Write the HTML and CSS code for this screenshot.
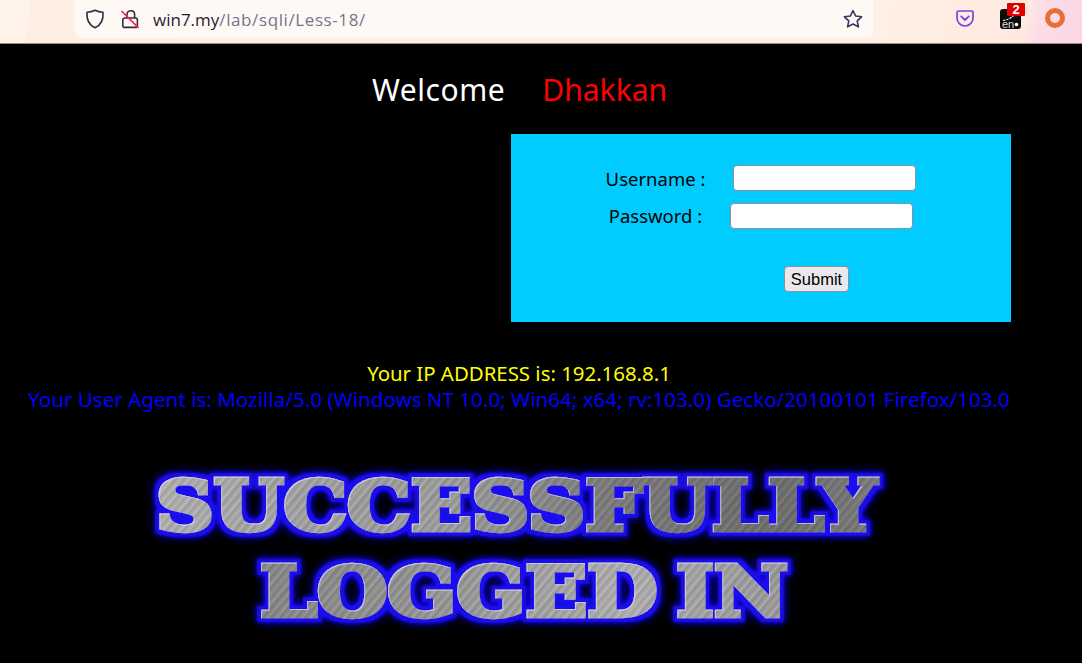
FILE: index.html
```html
<!DOCTYPE html>
<html lang="en">
<head>
<meta charset="utf-8">
<title>Less-18</title>
<link rel="stylesheet" href="styles.css">
</head>
<body>
<header class="toolbar">
  <div class="urlbar">
    <svg class="icon shield" viewBox="0 0 20 20" width="20" height="20"><path d="M10 1.2 C12.5 2.4 15 3 18 3.2 C18.6 10.5 15.6 16.2 10 18.8 C4.4 16.2 1.4 10.5 2 3.2 C5 3 7.5 2.4 10 1.2 Z" fill="none" stroke="#2f2c47" stroke-width="1.6" stroke-linejoin="round"/></svg>
    <svg class="icon lock" viewBox="0 0 20 20" width="20" height="20"><path d="M7 9 V5.2 C7 0.6 14.6 0.6 14.6 5.2 V9" fill="none" stroke="#2f2c47" stroke-width="1.6"/><rect x="2.8" y="9" width="14.6" height="9.4" rx="2" fill="none" stroke="#2f2c47" stroke-width="1.6"/><path d="M1.5 2 L18.5 18.8" stroke="#ff1f4e" stroke-width="1.7"/></svg>
    <span class="url"><span class="host">win7.my</span><span class="path">/lab/sqli/Less-18/</span></span>
    <svg class="icon star" viewBox="0 0 20 20" width="20" height="20"><path d="M10 1.6 L12.6 7 L18.6 7.8 L14.2 11.9 L15.4 17.9 L10 15 L4.6 17.9 L5.8 11.9 L1.4 7.8 L7.4 7 Z" fill="none" stroke="#38345a" stroke-width="1.6" stroke-linejoin="round"/></svg>
  </div>
  <div class="tools">
    <svg class="pocket" viewBox="0 0 18 17" width="18" height="17"><path d="M2.5 1 H15.5 A1.5 1.5 0 0 1 17 2.5 V8 A8 8 0 0 1 1 8 V2.5 A1.5 1.5 0 0 1 2.5 1 Z" fill="none" stroke="#7542e5" stroke-width="1.7"/><path d="M5.2 6.4 L9 10 L12.8 6.4" fill="none" stroke="#7542e5" stroke-width="1.8" stroke-linecap="round" stroke-linejoin="round"/></svg>
    <div class="ext">
      <svg class="ext-art" viewBox="0 0 21 20" width="21" height="20"><path d="M3 11.5 C7 10.5 11 10 15 5" fill="none" stroke="#fff" stroke-width="1.1" stroke-dasharray="2.4 1"/><circle cx="16.5" cy="15.5" r="1.8" fill="#fff"/></svg>
      <span class="ext-en">en</span>
      <span class="badge">2</span>
    </div>
    <span class="ring"></span>
  </div>
</header>
<main class="page">
  <h1 class="welcome"><span class="greet">Welcome</span><span class="name">Dhakkan</span></h1>
  <form class="login">
    <div class="row"><label for="u">Username :</label><input id="u" type="text"></div>
    <div class="row"><label class="pass" for="p">Password :</label><input id="p" type="password"></div>
    <button type="button" class="submit">Submit</button>
  </form>
  <div class="info">
    <p class="ip">Your IP ADDRESS is: 192.168.8.1</p>
    <p class="agent">Your User Agent is: Mozilla/5.0 (Windows NT 10.0; Win64; x64; rv:103.0) Gecko/20100101 Firefox/103.0</p>
  </div>
  <svg class="logo" viewBox="0 0 780 190" width="780" height="190" role="img">
    <defs>
      <pattern id="brush" width="26" height="26" patternUnits="userSpaceOnUse" patternTransform="rotate(-50)">
        <rect width="26" height="26" fill="#a4a4a4"/>
        <rect y="1" width="26" height="1" fill="#bdbdbd"/>
        <rect y="4" width="26" height="1.6" fill="#8f8f8f"/>
        <rect y="8" width="26" height=".8" fill="#b8b8b8"/>
        <rect y="10" width="26" height="2.4" fill="#989898"/>
        <rect y="14.5" width="26" height="1" fill="#c2c2c2"/>
        <rect y="17" width="26" height="1.4" fill="#929292"/>
        <rect y="21" width="26" height=".8" fill="#b4b4b4"/>
        <rect y="23.5" width="26" height="1.2" fill="#969696"/>
      </pattern>
      <linearGradient id="shade1" gradientUnits="userSpaceOnUse" x1="30" x2="755" y1="0" y2="0">
        <stop offset="0" stop-color="#fff" stop-opacity=".12"/>
        <stop offset=".4" stop-color="#000" stop-opacity=".05"/>
        <stop offset=".62" stop-color="#000" stop-opacity=".25"/>
        <stop offset=".85" stop-color="#000" stop-opacity=".33"/>
        <stop offset="1" stop-color="#000" stop-opacity=".25"/>
      </linearGradient>
      <linearGradient id="shade2" gradientUnits="userSpaceOnUse" x1="133" x2="660" y1="0" y2="0">
        <stop offset="0" stop-color="#000" stop-opacity=".18"/>
        <stop offset=".3" stop-color="#000" stop-opacity=".1"/>
        <stop offset=".7" stop-color="#fff" stop-opacity=".1"/>
        <stop offset="1" stop-color="#000" stop-opacity=".06"/>
      </linearGradient>
      <mask id="mask-one" maskUnits="userSpaceOnUse" x="0" y="0" width="780" height="190">
        <text class="logo-text" x="29" y="81" textLength="720" lengthAdjust="spacingAndGlyphs" fill="#fff" stroke="#fff">SUCCESSFULLY</text>
      </mask>
      <mask id="mask-two" maskUnits="userSpaceOnUse" x="0" y="0" width="780" height="190">
        <text class="logo-text" x="133" y="167" textLength="528" lengthAdjust="spacingAndGlyphs" fill="#fff" stroke="#fff">LOGGED IN</text>
      </mask>
      <filter id="glow" x="-5%" y="-25%" width="110%" height="150%">
        <feMorphology in="SourceAlpha" operator="dilate" radius="4" result="fat"/>
        <feFlood flood-color="#1a0df0" result="blue"/>
        <feComposite in="blue" in2="fat" operator="in" result="core"/>
        <feGaussianBlur in="core" stdDeviation="1.4" result="coreSoft"/>
        <feGaussianBlur in="core" stdDeviation="4.5" result="halo"/>
        <feOffset in="SourceAlpha" dx="1" dy="1" result="shift"/>
        <feComposite in="SourceAlpha" in2="shift" operator="out" result="edge"/>
        <feFlood flood-color="#e8e8f2" flood-opacity=".55" result="pale"/>
        <feComposite in="pale" in2="edge" operator="in" result="light"/>
        <feMerge>
          <feMergeNode in="halo"/>
          <feMergeNode in="coreSoft"/>
          <feMergeNode in="SourceGraphic"/>
          <feMergeNode in="light"/>
        </feMerge>
      </filter>
    </defs>
    <g filter="url(#glow)">
      <text class="logo-text" x="29" y="81" textLength="720" lengthAdjust="spacingAndGlyphs" fill="url(#brush)" stroke="url(#brush)">SUCCESSFULLY</text>
      <rect x="0" y="0" width="780" height="190" fill="url(#shade1)" mask="url(#mask-one)"/>
      <text class="logo-text" x="133" y="167" textLength="528" lengthAdjust="spacingAndGlyphs" fill="url(#brush)" stroke="url(#brush)">LOGGED IN</text>
      <rect x="0" y="0" width="780" height="190" fill="url(#shade2)" mask="url(#mask-two)"/>
    </g>
  </svg>
</main>
</body>
</html>
```
FILE: styles.css
```css
* { box-sizing: border-box; }
html, body { margin: 0; height: 100%; }
body {
  background: #000;
  overflow: hidden;
  display: flex;
  flex-direction: column;
  font-family: "Noto Sans", "Open Sans", "Liberation Sans", sans-serif;
}
.toolbar {
  height: 44px;
  flex: none;
  display: flex;
  align-items: flex-start;
  border-bottom: 1px solid #a08a80;
  background:
    radial-gradient(ellipse 30px 70px at 0 0, #fff3ea 0 98%, transparent 100%),
    linear-gradient(100deg, #ffeee3 0, #fff0e6 82%, #fee9e0 94.5%, #fcdbe6 96%, #fbd6e6 100%);
}
.urlbar {
  width: 798px;
  height: 38px;
  margin-left: 75px;
  background: #fff9f6;
  border-radius: 0 0 6px 6px;
  display: flex;
  align-items: center;
  padding-left: 10px;
  padding-right: 10px;
}
.icon { flex: none; }
.lock { margin-left: 15px; }
.url {
  margin-left: 13px;
  font-size: 17px;
  font-family: "Open Sans", "Noto Sans", sans-serif;
  flex: 1;
}
.host { color: #1f1d33; }
.path { color: #77748a; letter-spacing: .6px; }
.tools {
  display: flex;
  align-items: center;
  margin-left: 83px;
  height: 36px;
}
.ext {
  position: relative;
  width: 21px;
  height: 20px;
  margin-left: 26px;
  margin-top: 1px;
  background: #0b0b0b;
  border-radius: 3px;
}
.ext-art { position: absolute; left: 0; top: 0; }
.ext-en {
  position: absolute;
  left: 2px;
  bottom: -1px;
  font-size: 11px;
  line-height: 11px;
  color: #ddd;
  font-family: "Liberation Sans", sans-serif;
}
.badge {
  position: absolute;
  left: 7px;
  top: -6px;
  width: 18px;
  height: 13px;
  background: #e00000;
  border-radius: 1px;
  color: #fff;
  font: 700 13px/13px "Liberation Sans", sans-serif;
  text-align: center;
}
.ring {
  width: 20px;
  height: 20px;
  margin-left: 24px;
  border: 5px solid #e66f36;
  border-radius: 50%;
}
.page {
  flex: 1;
  display: flex;
  flex-direction: column;
  align-items: center;
}
.welcome {
  margin: 23px 0 0 372px;
  height: 67px;
  align-self: flex-start;
  display: flex;
  gap: 37px;
  font-size: 30px;
  line-height: 46px;
  font-weight: 400;
  color: #fff;
}
.greet { letter-spacing: .55px; }
.name { color: #f00; }
.login {
  width: 500px;
  height: 188px;
  align-self: flex-start;
  margin-left: 511px;
  background: #0cf;
  display: flex;
  flex-direction: column;
  align-items: center;
  padding-top: 31px;
}
.row {
  display: flex;
  align-items: center;
  gap: 28px;
  height: 26px;
  margin-bottom: 12px;
  font-size: 18.5px;
  color: #000;
}
.row .pass { margin-bottom: 2px; }
.row input {
  width: 183px;
  height: 26px;
  padding: 0;
  background: #fff;
  border: 1px solid #8f8f9d;
  border-radius: 4px;
}
.submit {
  margin-top: 25px;
  margin-left: 111px;
  width: 65px;
  height: 26px;
  padding: 0;
  background: #e9e9ed;
  border: 1px solid #8f8f9d;
  border-radius: 4px;
  color: #000;
  font: 16.5px "Liberation Sans", sans-serif;
}
.info {
  align-self: flex-start;
  width: 1038px;
  margin-top: 38px;
  text-align: center;
}
.ip, .agent { margin: 0; line-height: 26px; white-space: nowrap; }
.ip { color: #ff0; font-size: 20.4px; }
.agent { color: #00f; font-size: 20.6px; }
.logo {
  display: block;
  align-self: flex-start;
  margin-left: 127px;
  margin-top: 37px;
}
.logo-text {
  font-family: "DejaVu Serif", serif;
  font-weight: 700;
  font-size: 69px;
  stroke-width: 4.5px;
  stroke-linejoin: miter;
  word-spacing: -8px;
}
```
